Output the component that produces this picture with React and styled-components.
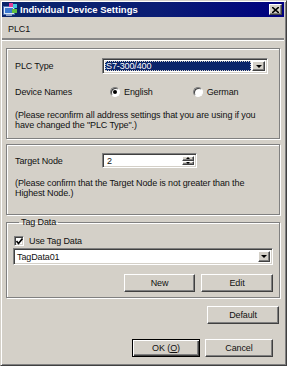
import styled, { createGlobalStyle } from 'styled-components';

const GlobalStyle = createGlobalStyle`
  html, body { margin: 0; padding: 0; background: #d4d0c8; }
  * { box-sizing: border-box; }
`;

const raised = `
  background: #d4d0c8;
  border: 1px solid;
  border-color: #fff #404040 #404040 #fff;
  box-shadow: inset -1px -1px #808080;
`;

const sunken = `
  background: #fff;
  border: 1px solid;
  border-color: #808080 #fff #fff #808080;
  box-shadow: inset 1px 1px #404040, inset -1px -1px #d4d0c8;
`;

const Window = styled.div`
  width: 287px;
  height: 366px;
  background: #d4d0c8;
  border: 1px solid;
  border-color: #d4d0c8 #404040 #404040 #d4d0c8;
  box-shadow: inset 1px 1px #fff, inset -1px -1px #808080;
  padding: 1px 2px 2px 1px;
  display: flex;
  flex-direction: column;
  font-family: "Liberation Sans", Arial, sans-serif;
  font-size: 9px;
  letter-spacing: -0.12px;
  color: #111;
`;

const TitleBar = styled.div`
  height: 15px;
  display: flex;
  align-items: center;
  padding: 0 2px 0 1px;
  background: linear-gradient(90deg, #0a246a 0%, #0a1d74 55%, #000080 100%);
`;

const Title = styled.span`
  flex: 1;
  margin-left: 3px;
  color: #fff;
  font-weight: bold;
  font-size: 9.5px;
  letter-spacing: 0;
`;

const CloseButton = styled.div`
  ${raised}
  width: 13px;
  height: 11px;
  display: flex;
  align-items: center;
  justify-content: center;
`;

const DeviceName = styled.div`
  height: 21px;
  padding: 3px 0 0 6px;
  display: flex;
  align-items: center;
`;

const Separator = styled.div`
  height: 3px;
  border-top: 2px solid #858585;
  border-bottom: 1px solid #fff;
`;

const Body = styled.div`
  flex: 1;
  display: flex;
  flex-direction: column;
  padding: 7px 4px 0 4px;
`;

const Group = styled.div`
  height: ${p => p.$h}px;
  margin-top: ${p => p.$mt || 0}px;
  border: 1px solid #808080;
  box-shadow: inset 1px 1px #fff, 1px 1px #fff;
  padding: ${p => p.$pt}px 8px 0 8px;
  display: flex;
  flex-direction: column;
`;

const TagGroup = styled.fieldset`
  margin: 2px 0 0 0;
  padding: 8px 6px 0 6px;
  min-width: 0;
  height: 81px;
  border: 1px solid #808080;
  box-shadow: inset 1px 1px #fff, 1px 1px #fff;
  display: flex;
  flex-direction: column;
`;

const Legend = styled.legend`
  margin-left: 6px;
  padding: 0 2px;
  line-height: 10px;
`;

const Row = styled.div`
  height: ${p => p.$h || 16}px;
  margin-top: ${p => p.$mt || 0}px;
  display: flex;
  align-items: center;
`;

const Label = styled.span`
  width: 87px;
  flex-shrink: 0;
`;

const Note = styled.p`
  margin: ${p => p.$mt}px 0 0 0;
  line-height: 10px;
`;

const Combo = styled.div`
  ${sunken}
  width: ${p => p.$w}px;
  height: ${p => p.$h}px;
  padding: 2px;
  display: flex;
  align-items: stretch;
`;

const ComboText = styled.div`
  flex: 1;
  display: flex;
  align-items: center;
  padding-left: 1px;
  margin-right: 1px;
  ${p => p.$selected && `
    background: #0a246a;
    color: #fff;
    outline: 1px dotted #d4d0c8;
    outline-offset: -1px;
  `}
`;

const ArrowButton = styled.div`
  ${raised}
  width: ${p => p.$w || 13}px;
  display: flex;
  align-items: center;
  justify-content: center;
`;

const Arrow = styled.span`
  width: 0;
  height: 0;
  border-left: ${p => p.$s}px solid transparent;
  border-right: ${p => p.$s}px solid transparent;
  ${p => (p.$up ? 'border-bottom' : 'border-top')}: ${p => p.$s}px solid #000;
`;

const Radio = styled.span`
  width: 10px;
  height: 10px;
  border-radius: 50%;
  margin: 0 4px 0 ${p => p.$ml}px;
  background: #fff;
  border: 1px solid;
  border-color: #808080 #fff #fff #808080;
  box-shadow: inset 1px 1px #404040;
  display: flex;
  align-items: center;
  justify-content: center;
  &::after {
    content: '';
    width: 4px;
    height: 4px;
    border-radius: 50%;
    background: ${p => (p.$checked ? '#000' : 'transparent')};
  }
`;

const Spin = styled.div`
  ${sunken}
  width: 95px;
  height: 15px;
  padding: 2px;
  display: flex;
`;

const SpinText = styled.div`
  flex: 1;
  display: flex;
  align-items: center;
  padding-left: 2px;
`;

const SpinButtons = styled.div`
  width: 12px;
  display: flex;
  flex-direction: column;
  & > div { flex: 1; }
`;

const Check = styled.span`
  ${sunken}
  width: 10px;
  height: 10px;
  margin: 0 5px 0 1px;
  display: flex;
  align-items: center;
  justify-content: center;
`;

const ButtonRow = styled.div`
  display: flex;
  justify-content: flex-end;
  gap: ${p => p.$gap || 5}px;
  margin: ${p => p.$m};
`;

const Button = styled.div`
  ${raised}
  width: ${p => p.$w || 71}px;
  height: 18px;
  display: flex;
  align-items: center;
  justify-content: center;
  ${p => p.$default && `
    border: 1px solid #000;
    box-shadow: inset 1px 1px #fff, inset -1px -1px #404040, inset -2px -2px #808080;
  `}
  u { text-decoration: underline; }
`;

function TitleIcon() {
  return (
    <svg width="14" height="13" viewBox="0 0 14 13">
      <rect x="0.5" y="3.5" width="11" height="8" fill="#dbe8f8" stroke="#4a6fb0" />
      <rect x="2" y="5" width="8" height="5" fill="#3a78d0" />
      <rect x="6" y="0" width="4" height="4" fill="#e0409a" />
      <rect x="10" y="1" width="4" height="4" fill="#40c8e0" />
      <rect x="9" y="6" width="5" height="4" fill="#60c040" />
      <rect x="3" y="11" width="6" height="2" fill="#8aa0c8" />
    </svg>
  );
}

function App() {
  return (
    <>
      <GlobalStyle />
      <Window>
        <TitleBar>
          <TitleIcon />
          <Title>Individual Device Settings</Title>
          <CloseButton>
            <svg width="7" height="6" viewBox="0 0 7 6">
              <path d="M0 0 L7 6 M7 0 L0 6" stroke="#000" strokeWidth="1.6" />
            </svg>
          </CloseButton>
        </TitleBar>
        <DeviceName>PLC1</DeviceName>
        <Separator />
        <Body>
          <Group $h={91} $pt={9}>
            <Row $h={16}>
              <Label>PLC Type</Label>
              <Combo $w={166} $h={16}>
                <ComboText $selected>S7-300/400</ComboText>
                <ArrowButton $w={13}><Arrow $s={3} /></ArrowButton>
              </Combo>
            </Row>
            <Row $mt={10}>
              <Label>Device Names</Label>
              <Radio $ml={8} $checked />
              English
              <Radio $ml={40} />
              German
            </Row>
            <Note $mt={10}>
              (Please reconfirm all address settings that you are using if you<br />
              have changed the "PLC Type".)
            </Note>
          </Group>
          <Group $h={71} $mt={5} $pt={8}>
            <Row $h={15}>
              <Label>Target Node</Label>
              <Spin>
                <SpinText>2</SpinText>
                <SpinButtons>
                  <ArrowButton $w={12}><Arrow $s={2} $up /></ArrowButton>
                  <ArrowButton $w={12}><Arrow $s={2} /></ArrowButton>
                </SpinButtons>
              </Spin>
            </Row>
            <Note $mt={10}>
              (Please confirm that the Target Node is not greater than the<br />
              Highest Node.)
            </Note>
          </Group>
          <TagGroup>
            <Legend>Tag Data</Legend>
            <Row $h={12}>
              <Check>
                <svg width="7" height="7" viewBox="0 0 7 7">
                  <path d="M0.5 3 L2.5 5.5 L6.5 0.5" stroke="#000" strokeWidth="1.6" fill="none" />
                </svg>
              </Check>
              Use Tag Data
            </Row>
            <Row $h={17} $mt={1}>
              <Combo $w={262} $h={17}>
                <ComboText>TagData01</ComboText>
                <ArrowButton $w={12}><Arrow $s={3} /></ArrowButton>
              </Combo>
            </Row>
            <ButtonRow $m="9px 0 0 0" $gap={6}>
              <Button $w={71}>New</Button>
              <Button $w={72}>Edit</Button>
            </ButtonRow>
          </TagGroup>
          <ButtonRow $m="8px 1px 0 0">
            <Button $w={72}>Default</Button>
          </ButtonRow>
          <ButtonRow $m="15px 7px 0 0" $gap={5}>
            <Button $w={68} $default>OK (<u>O</u>)</Button>
            <Button $w={68}>Cancel</Button>
          </ButtonRow>
        </Body>
      </Window>
    </>
  );
}

export default App;
